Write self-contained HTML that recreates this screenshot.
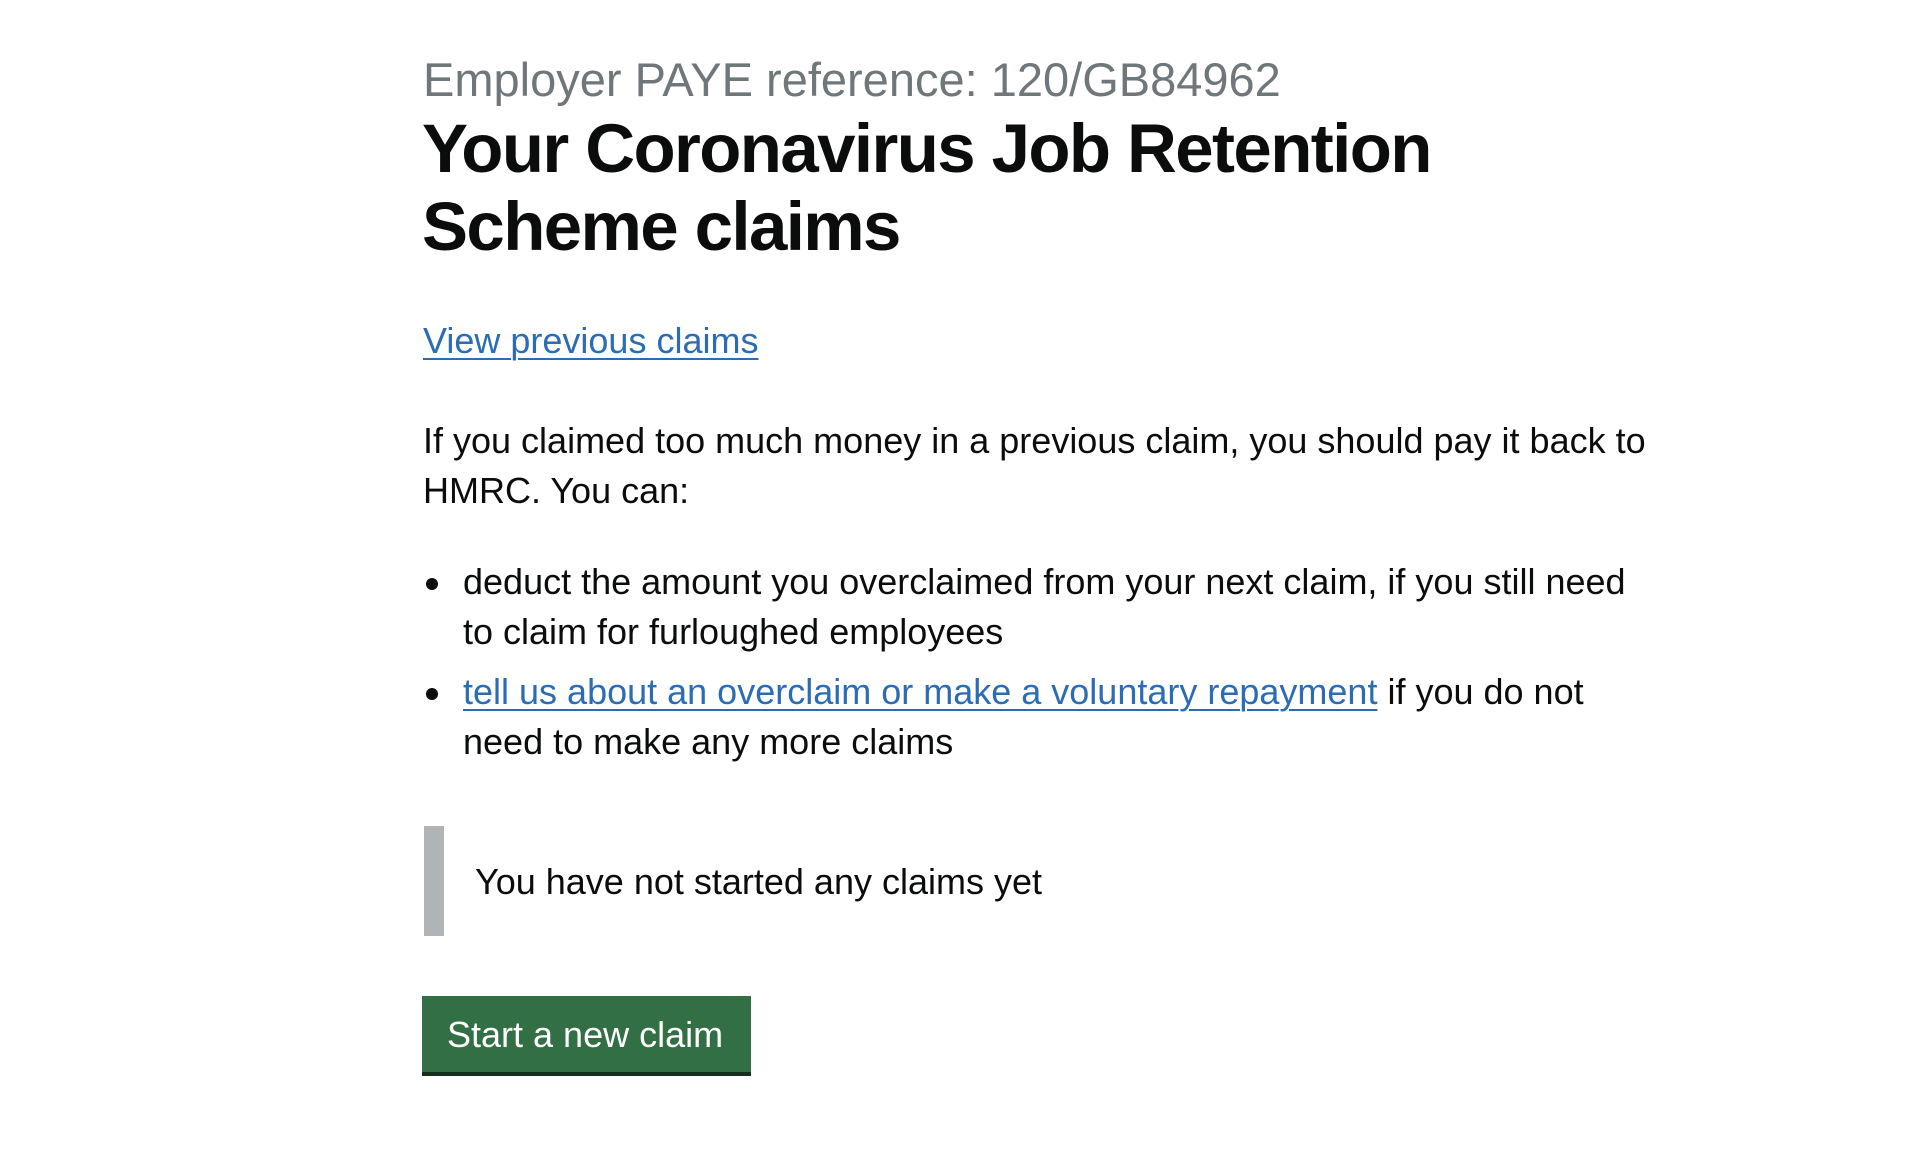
<!DOCTYPE html>
<html><head><meta charset="utf-8"><style>
html,body{margin:0;padding:0;background:#fff;width:1908px;height:1150px;overflow:hidden}
body{font-family:"Liberation Sans",Arial,sans-serif;color:#0b0c0c}
.a{position:absolute;white-space:nowrap}
.cap{left:423px;top:50px;font-size:47px;color:#6f777b;line-height:60px}
.h{left:422px;font-size:69px;font-weight:bold;line-height:80px;letter-spacing:-1.6px}
.b{font-size:36px;line-height:50px}
a{color:#2b6cb5;text-decoration:underline;text-decoration-thickness:2px;text-underline-offset:5px}
.dot{position:absolute;width:12px;height:12px;border-radius:50%;background:#0b0c0c}
</style></head><body>
<div class="a cap">Employer PAYE reference: 120/GB84962</div>
<div class="a h" style="top:109px">Your Coronavirus Job Retention</div>
<div class="a h" style="top:187px">Scheme claims</div>
<div class="a b" style="left:423px;top:316px"><a>View previous claims</a></div>
<div class="a b" style="left:423px;top:416px">If you claimed too much money in a previous claim, you should pay it back to</div>
<div class="a b" style="left:423px;top:466px">HMRC. You can:</div>
<div class="dot" style="left:426px;top:578px"></div>
<div class="a b" style="left:463px;top:557px">deduct the amount you overclaimed from your next claim, if you still need</div>
<div class="a b" style="left:463px;top:607px">to claim for furloughed employees</div>
<div class="dot" style="left:426px;top:688px"></div>
<div class="a b" style="left:463px;top:667px"><a>tell us about an overclaim or make a voluntary repayment</a> if you do not</div>
<div class="a b" style="left:463px;top:717px">need to make any more claims</div>
<div style="position:absolute;left:424px;top:826px;width:20px;height:110px;background:#b1b4b6"></div>
<div class="a b" style="left:475px;top:857px">You have not started any claims yet</div>
<div style="position:absolute;left:422px;top:996px;width:329px;height:76px;background:#336f44;box-shadow:0 4px 0 #14301c"></div>
<div class="a" style="left:447px;top:1013px;font-size:36px;line-height:44px;color:#fff">Start a new claim</div>
</body></html>
